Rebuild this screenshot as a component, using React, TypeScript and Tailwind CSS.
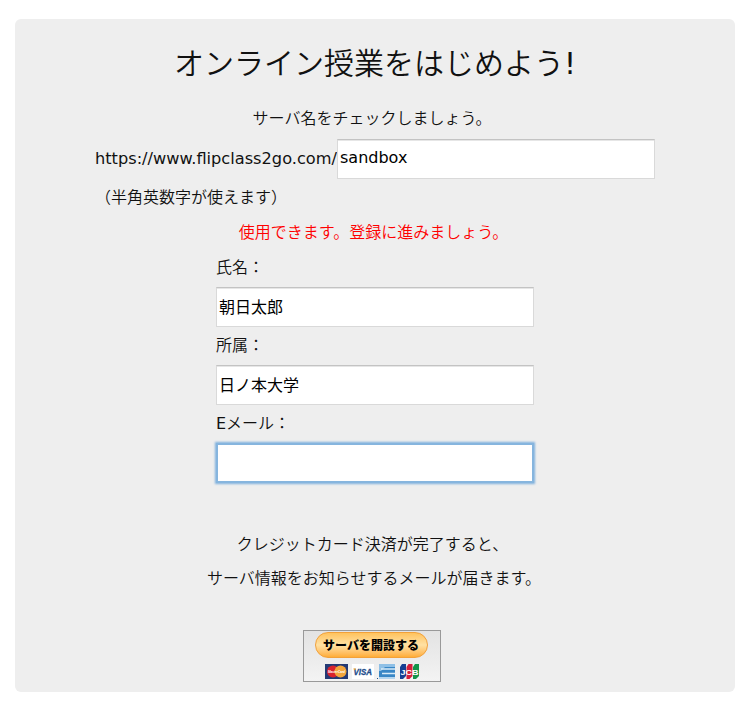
import React from 'react';

interface TextFieldProps {
  value?: string;
  focused?: boolean;
}

const TextField: React.FC<TextFieldProps> = ({ value = '', focused = false }) => {
  return (
    <input
      type="text"
      defaultValue={value}
      className={
        focused
          ? 'block w-[318px] h-10 bg-white border-2 border-[#86b5de] px-px text-black outline-none shadow-[0_0_2px_1px_#7fb0dd]'
          : 'block w-[318px] h-10 bg-white border border-[#d9d9d9] border-t-[#c3c3c3] px-0.5 pb-[3px] font-normal text-black outline-none shadow-[inset_0_1px_0_#e6e6e6]'
      }
    />
  );
};

const CardLogos: React.FC = () => {
  return (
    <div className="flex items-center h-[15px] gap-[3px] ml-0.5">
      <svg width="24" height="15" viewBox="0 0 24 15">
        <rect width="23" height="15" fill="#243a75" />
        <circle cx="8" cy="7.5" r="6" fill="#d9232e" />
        <circle cx="15.5" cy="7.5" r="6" fill="#f4a63c" />
        <text x="3" y="9" fontSize="4" fontWeight="bold" fontStyle="italic" fill="#fff" textLength="17" lengthAdjust="spacingAndGlyphs" fontFamily="Liberation Sans, sans-serif">MasterCard</text>
      </svg>
      <svg width="22" height="15" viewBox="0 0 22 15">
        <rect width="22" height="15" fill="#fff" />
        <text x="1.5" y="11" fontSize="9" fontWeight="bold" fontStyle="italic" fill="#1d4d8c" stroke="#1d4d8c" strokeWidth="0.3" textLength="18.5" lengthAdjust="spacingAndGlyphs" fontFamily="Liberation Sans, sans-serif">VISA</text>
        <path d="M1.2 4.6h3l-1.4 2z" fill="#f0a431" />
      </svg>
      <svg width="19" height="15" viewBox="0 0 19 15">
        <rect x="2" width="16" height="15" fill="#3987c6" />
        <path d="M2 0h16v3H8L4 7H2z" fill="#8fc0e6" />
        <path d="M4 5h14M5 9.5h13" stroke="#d9ecf8" strokeWidth="1.4" />
        <path d="M2 13h16v2H2z" fill="#b5d6ef" />
        <path d="M0 14h1v1H0z" fill="#1d4d8c" />
      </svg>
      <svg width="21" height="15" viewBox="0 0 21 15">
        <path d="M3 0h4v12l-3 3H1V3z" fill="#173f92" />
        <path d="M9.5 0h4v12l-3 3h-3V3z" fill="#d51f3c" />
        <path d="M16 0h4v12l-3 3h-3V3z" fill="#16944a" />
        <text x="1.5" y="10.5" fontSize="8" fontWeight="bold" fill="#fff" textLength="18" lengthAdjust="spacingAndGlyphs" fontFamily="Liberation Sans, sans-serif">JCB</text>
      </svg>
    </div>
  );
};

export default function App() {
  return (
    <div className="w-[750px] h-[711px] bg-white px-[15px] pt-[19px] font-['DejaVu_Sans','Noto_Sans_CJK_JP',sans-serif] text-base text-[#111] font-[350]">
      <main className="h-[673px] rounded-md bg-[#eee] pt-[22px]">
        <h1 className="h-[46px] leading-[46px] text-[30px] text-center">
          オンライン授業をはじめよう<span className="font-normal">!</span>
        </h1>
        <p className="mt-3.5 h-[38px] leading-[36px] text-center pr-1.5">サーバ名をチェックしましょう。</p>

        <div className="flex items-center pl-20">
          <span className="w-[242px] whitespace-nowrap text-[16.2px] font-normal">https://www.flipclass2go.com/</span>
          <TextField value="sandbox" />
        </div>
        <p className="h-9 leading-[38px] pl-20">（半角英数字が使えます）</p>
        <p className="h-[34px] leading-[36px] text-center pr-[3px] text-[#f00]">使用できます。登録に進みましょう。</p>

        <div className="pl-[201px]">
          <label className="block h-[38px] leading-[38px]">氏名：</label>
          <TextField value="朝日太郎" />
          <label className="block h-[38px] leading-[38px]">所属：</label>
          <TextField value="日ノ本大学" />
          <label className="block h-[38px] leading-[38px]"><span className="font-normal">E</span>メール：</label>
          <TextField focused />
        </div>

        <div className="mt-[45px] leading-[34px] text-center">
          <p className="pr-[5px]">クレジットカード決済が完了すると、</p>
          <p className="pr-0.5">サーバ情報をお知らせするメールが届きます。</p>
        </div>

        <button className="mt-[34px] ml-[288px] flex flex-col items-center w-[138px] h-[52px] border border-[#999] bg-linear-to-b from-[#e3e3e3] to-[#f3f3f3] pt-px pr-0.5">
          <span className="w-[113px] h-[26px] mb-1.5 rounded-full border border-[#f2a13a] bg-linear-to-b from-[#ffc35c] via-[#ffe1a3] to-[#ffad36] text-xs leading-[27px] font-black text-black whitespace-nowrap">サーバを開設する</span>
          <CardLogos />
        </button>
      </main>
    </div>
  );
}
